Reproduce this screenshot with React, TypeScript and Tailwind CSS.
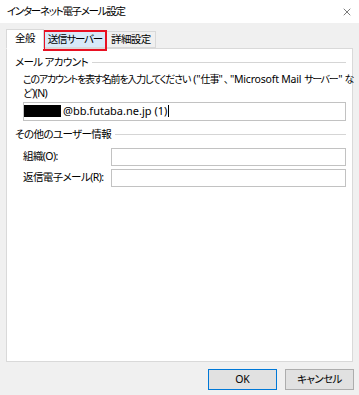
import { X } from "lucide-react";

const FONT =
  "font-['Noto_Sans','Noto_Sans_CJK_JP',sans-serif] [font-feature-settings:'palt']";

function GroupLabel({ text }: { text: string }) {
  return (
    <div className="flex items-center gap-[4px] pr-[6px]">
      <span className="whitespace-nowrap">{text}</span>
      <div className="flex-1 h-[2px] border-t border-[#d5d5d5] border-b-white border-b" />
    </div>
  );
}

function Field({ label }: { label: string }) {
  return (
    <div className="flex items-center h-[18px] pl-[8px] pr-[6px]">
      <span className="w-[88px] whitespace-nowrap">{label}</span>
      <div className="flex-1 h-[18px] border border-[#c2c2c2] bg-white" />
    </div>
  );
}

export default function App() {
  return (
    <div className={`w-[359px] h-[395px] bg-[#f0f0f0] text-[10.5px] tracking-[-0.6px] text-black overflow-hidden ${FONT}`}>
      {/* title bar */}
      <div className="h-[23px] bg-white flex items-center justify-between pl-[7px] pr-[6px]">
        <span className="tracking-[-1.3px]">インターネット電子メール設定</span>
        <X size={12} strokeWidth={1.2} className="text-[#222]" />
      </div>

      {/* tabs */}
      <div className="relative flex items-end h-[25px] pl-[6px] pt-[5px]">
        <div className="relative z-10 h-[20px] -mb-[1px] px-[8px] bg-white border border-[#d9d9d9] border-b-white flex items-center">
          全般
        </div>
        <div className="relative h-[17px] px-[4px] bg-[#d8eaf9] border border-[#d9d9d9] border-l-0 flex items-center tracking-[-1.2px]">
          送信サーバー
          <span className="absolute -left-[1px] -top-[2px] -right-[1px] -bottom-[4px] border-2 border-[#e81123]" />
        </div>
        <div className="h-[17px] px-[4px] bg-[#f0f0f0] border border-[#d9d9d9] border-l-0 flex items-center">
          詳細設定
        </div>
      </div>

      {/* panel */}
      <div className="ml-[6px] w-[347px] h-[314px] bg-white border border-[#d9d9d9] pt-[6px] pl-[8px]">
        <GroupLabel text="メール アカウント" />
        <div className="pl-[8px] pr-[6px] mt-[1px] leading-[14px]">
          <div className="flex items-baseline whitespace-nowrap text-[10px] tracking-[-1px]">
            <span className="tracking-[-1.2px]">このアカウントを表す名前を入力してください</span>
            <span className="ml-[3px] tracking-normal text-[10.5px]">(&quot;</span>
            <span>仕事</span>
            <span className="tracking-normal text-[10.5px]">&quot;</span>
            <span className="ml-[1px] mr-[2px]">、</span>
            <span className="tracking-[-0.2px] text-[10.5px]">&quot;Microsoft Mail</span>
            <span className="ml-[3px] tracking-[-1.4px]">サーバー</span>
            <span className="ml-[1px] tracking-normal text-[10.5px]">&quot;</span>
            <span className="ml-[2px]">な</span>
          </div>
          <div>ど)(N)</div>
          <div className="mt-[2px] h-[19px] border border-[#c2c2c2] flex items-center">
            <div className="w-[37px] h-[12px] bg-black" />
            <span className="ml-[2px] tracking-normal text-[11px]">@bb.futaba.ne.jp (1)</span>
            <span className="ml-[1px] w-px h-[12px] bg-black" />
          </div>
        </div>

        <div className="mt-[6px]">
          <GroupLabel text="その他のユーザー情報" />
        </div>
        <div className="mt-[5px] flex flex-col gap-[3px]">
          <Field label="組織(O):" />
          <Field label="返信電子メール(R):" />
        </div>
      </div>

      {/* buttons */}
      <div className="flex justify-end gap-[8px] pr-[5px] mt-[7px]">
        <button className="w-[69px] h-[21px] bg-[#e1e1e1] border border-[#0078d7] tracking-normal">
          OK
        </button>
        <button className="w-[69px] h-[21px] bg-[#e1e1e1] border border-[#adadad]">
          キャンセル
        </button>
      </div>
    </div>
  );
}
